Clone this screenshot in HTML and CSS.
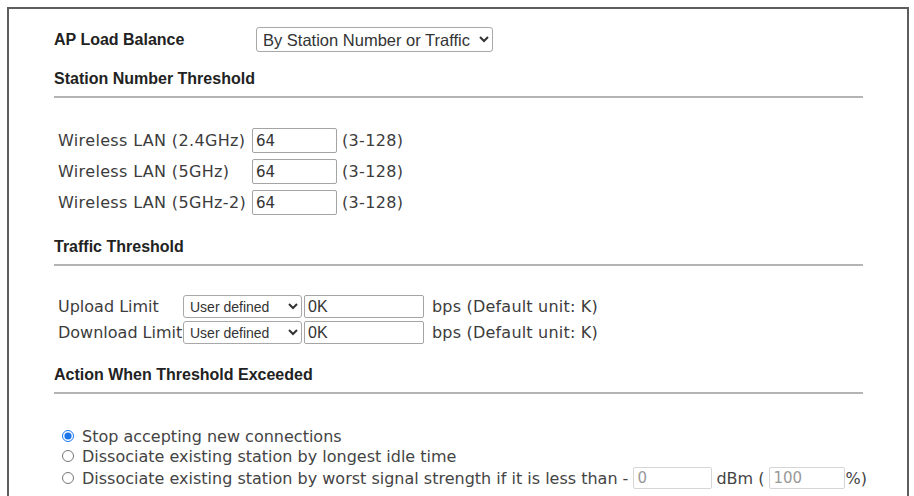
FILE: index.html
```html
<!DOCTYPE html>
<html lang="en">
<head>
    <meta charset="UTF-8">
    <title>AP Load Balance</title>
    <link rel="stylesheet" href="styles.css">
</head>
<body>
    <div class="panel">
        <div class="mode-row">
            <span class="label-main">AP Load Balance</span>
            <select class="sel-mode">
                <option>By Station Number or Traffic</option>
            </select>
        </div>

        <h3 class="section">Station Number Threshold</h3>
        <div class="rule"></div>
        <div class="wlan-grid">
            <span class="label">Wireless LAN (2.4GHz)</span>
            <input class="num" type="text" value="64">
            <span class="label">(3-128)</span>

            <span class="label">Wireless LAN (5GHz)</span>
            <input class="num" type="text" value="64">
            <span class="label">(3-128)</span>

            <span class="label">Wireless LAN (5GHz-2)</span>
            <input class="num" type="text" value="64">
            <span class="label">(3-128)</span>
        </div>

        <h3 class="section sec-traffic">Traffic Threshold</h3>
        <div class="rule"></div>
        <div class="traffic-grid">
            <span class="label">Upload Limit</span>
            <select class="sel-unit"><option>User defined</option></select>
            <input class="limit" type="text" value="0K">
            <span class="label unit-note">bps (Default unit: K)</span>

            <span class="label">Download Limit</span>
            <select class="sel-unit"><option>User defined</option></select>
            <input class="limit" type="text" value="0K">
            <span class="label unit-note">bps (Default unit: K)</span>
        </div>

        <h3 class="section sec-action">Action When Threshold Exceeded</h3>
        <div class="rule"></div>
        <div class="actions">
            <label class="opt"><input type="radio" name="act" checked>Stop accepting new connections</label>
            <label class="opt"><input type="radio" name="act">Dissociate existing station by longest idle time</label>
            <label class="opt opt-signal">
                <input type="radio" name="act">Dissociate existing station by worst signal strength if it is less than -
                <input class="sig sig-dbm" type="text" value="0">
                <span class="unit">dBm (</span>
                <input class="sig sig-pct" type="text" value="100">
                <span>%)</span>
            </label>
        </div>
    </div>
</body>
</html>
```

FILE: styles.css
```css
body {
    margin: 0;
    background: #fff;
    overflow: hidden;
    font-family: "DejaVu Sans", Verdana, sans-serif;
}
.panel {
    box-sizing: border-box;
    width: 902px;
    height: 560px;
    margin: 7px 0 0 7px;
    border: 2px solid #5e5e5e;
    padding: 18px 44px 0 45px;
}
.mode-row {
    display: flex;
    align-items: center;
    height: 25px;
}
.label-main {
    width: 202px;
    font: bold 16px/20px "Liberation Sans", Arial, sans-serif;
    color: #222;
}
select {
    font-family: "Liberation Sans", Arial, sans-serif;
    color: #333;
    background: #fff;
    border: 1px solid #a8a8a8;
    border-radius: 3px;
    padding: 0 2px;
    box-sizing: border-box;
}
.sel-mode {
    width: 237px;
    height: 25px;
    font-size: 16.5px;
}
.section {
    margin: 17px 0 0;
    font: bold 16px/20px "Liberation Sans", Arial, sans-serif;
    color: #222;
}
.sec-traffic {
    margin-top: 22px;
}
.sec-action {
    margin-top: 21px;
}
.rule {
    height: 2px;
    margin-top: 7px;
    background: #b4b4b4;
}
.label {
    font-size: 16px;
    color: #3c3c3c;
    white-space: nowrap;
}
.wlan-grid {
    display: grid;
    grid-template-columns: 189px 85px auto;
    justify-content: start;
    align-items: center;
    column-gap: 5px;
    row-gap: 6px;
    margin-top: 30px;
    padding-left: 4px;
}
.wlan-grid .label {
    letter-spacing: 0.35px;
}
input[type="text"] {
    box-sizing: border-box;
    border: 1px solid #a4a4a4;
    border-radius: 2px;
    padding: 0 3px;
    color: #333;
    background: #fff;
    outline: none;
}
.num {
    width: 85px;
    height: 25px;
    font: 15px "DejaVu Sans", Verdana, sans-serif;
}
.traffic-grid {
    display: grid;
    grid-template-columns: 123px 119px 120px auto;
    justify-content: start;
    align-items: center;
    column-gap: 2px;
    row-gap: 3px;
    margin-top: 29px;
    padding-left: 4px;
}
.unit-note {
    margin-left: 6px;
    letter-spacing: 0.2px;
}
.sel-unit {
    width: 119px;
    height: 23px;
    font-size: 14px;
}
.limit {
    width: 120px;
    height: 23px;
    font: 16px "Liberation Sans", Arial, sans-serif;
}
.actions {
    margin-top: 32px;
    font-size: 16px;
    color: #444;
}
.opt {
    display: flex;
    align-items: center;
    height: 20px;
    white-space: nowrap;
}
.opt input[type="radio"] {
    width: 12px;
    height: 12px;
    margin: 0 8px 0 8px;
    accent-color: #1a73e8;
}
.opt-signal {
    height: 24px;
}
.opt .sig {
    height: 22px;
    margin-left: 5px;
    font: 15px "DejaVu Sans", Verdana, sans-serif;
    color: #999;
    border-color: #d6d6d6;
}
.sig-dbm {
    width: 79px;
}
.sig-pct {
    width: 76px;
}
.unit {
    margin-left: 4px;
}
```
